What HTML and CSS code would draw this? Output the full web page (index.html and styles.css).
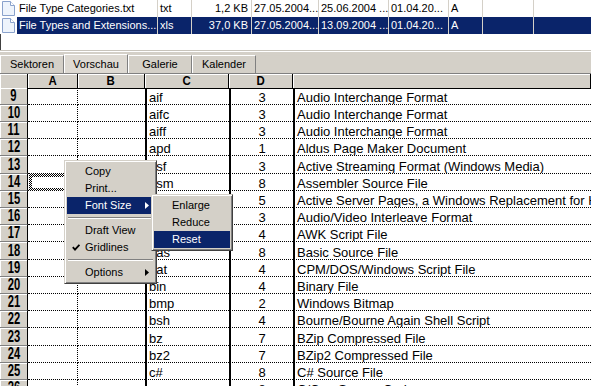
FILE: index.html
```html
<!DOCTYPE html>
<html lang="de">
<head>
  <meta charset="UTF-8">
  <title>Vorschau</title>
  <link rel="stylesheet" href="styles.css">
</head>
<body>
  <div class="files">
    <div class="file">
      <span class="icon"><svg width="13" height="15" viewBox="0 0 13 15"><path d="M0.5 0.5h8l4 4v10h-12z" fill="#eef4fc" stroke="#8aa2cc"/><path d="M8.5 0.5v4h4" fill="#fff" stroke="#8aa2cc"/></svg></span>
      <span>File Type Categories.txt</span>
      <span>txt</span>
      <span class="num">1,2 KB</span>
      <span>27.05.2004...</span>
      <span>25.06.2004 ...</span>
      <span>01.04.20...</span>
      <span>A</span>
      <span></span>
      <span></span>
    </div>
    <div class="file sel">
      <span class="icon"><svg width="13" height="15" viewBox="0 0 13 15"><path d="M0.5 0.5h8l4 4v10h-12z" fill="#eef4fc" stroke="#8aa2cc"/><path d="M8.5 0.5v4h4" fill="#fff" stroke="#8aa2cc"/></svg></span>
      <span>File Types and Extensions....</span>
      <span>xls</span>
      <span class="num">37,0 KB</span>
      <span>27.05.2004...</span>
      <span>13.09.2004 ...</span>
      <span>01.04.20...</span>
      <span>A</span>
      <span></span>
      <span></span>
    </div>
    <div class="rest"></div>
  </div>

  <div class="tabs">
    <div class="tab">Sektoren</div>
    <div class="tab on">Vorschau</div>
    <div class="tab">Galerie</div>
    <div class="tab">Kalender</div>
  </div>

  <div class="sheet">
    <div class="hdr">
      <div></div>
      <div><b>A</b></div>
      <div><b>B</b></div>
      <div><b>C</b></div>
      <div><b>D</b></div>
      <div></div>
    </div>
    <div class="rows">
      <div class="row"><div class="rh"><b>9</b></div><div class="a"></div><div></div><div class="c">aif</div><div class="d">3</div><div class="e">Audio Interchange Format</div></div>
      <div class="row"><div class="rh"><b>10</b></div><div class="a"></div><div></div><div class="c">aifc</div><div class="d">3</div><div class="e">Audio Interchange Format</div></div>
      <div class="row"><div class="rh"><b>11</b></div><div class="a"></div><div></div><div class="c">aiff</div><div class="d">3</div><div class="e">Audio Interchange Format</div></div>
      <div class="row"><div class="rh"><b>12</b></div><div class="a"></div><div></div><div class="c">apd</div><div class="d">1</div><div class="e">Aldus Page Maker Document</div></div>
      <div class="row"><div class="rh"><b>13</b></div><div class="a"></div><div></div><div class="c">asf</div><div class="d">3</div><div class="e">Active Streaming Format (Windows Media)</div></div>
      <div class="row"><div class="rh"><b>14</b></div><div class="a cur"></div><div></div><div class="c">asm</div><div class="d">8</div><div class="e">Assembler Source File</div></div>
      <div class="row"><div class="rh"><b>15</b></div><div class="a"></div><div></div><div class="c">asp</div><div class="d">5</div><div class="e">Active Server Pages, a Windows Replacement for HTML</div></div>
      <div class="row"><div class="rh"><b>16</b></div><div class="a"></div><div></div><div class="c">avi</div><div class="d">3</div><div class="e">Audio/Video Interleave Format</div></div>
      <div class="row"><div class="rh"><b>17</b></div><div class="a"></div><div></div><div class="c">awk</div><div class="d">4</div><div class="e">AWK Script File</div></div>
      <div class="row"><div class="rh"><b>18</b></div><div class="a"></div><div></div><div class="c">bas</div><div class="d">8</div><div class="e">Basic Source File</div></div>
      <div class="row"><div class="rh"><b>19</b></div><div class="a"></div><div></div><div class="c">bat</div><div class="d">4</div><div class="e">CPM/DOS/Windows Script File</div></div>
      <div class="row"><div class="rh"><b>20</b></div><div class="a"></div><div></div><div class="c">bin</div><div class="d">4</div><div class="e">Binary File</div></div>
      <div class="row"><div class="rh"><b>21</b></div><div class="a"></div><div></div><div class="c">bmp</div><div class="d">2</div><div class="e">Windows Bitmap</div></div>
      <div class="row"><div class="rh"><b>22</b></div><div class="a"></div><div></div><div class="c">bsh</div><div class="d">4</div><div class="e">Bourne/Bourne Again Shell Script</div></div>
      <div class="row"><div class="rh"><b>23</b></div><div class="a"></div><div></div><div class="c">bz</div><div class="d">7</div><div class="e">BZip Compressed File</div></div>
      <div class="row"><div class="rh"><b>24</b></div><div class="a"></div><div></div><div class="c">bz2</div><div class="d">7</div><div class="e">BZip2 Compressed File</div></div>
      <div class="row"><div class="rh"><b>25</b></div><div class="a"></div><div></div><div class="c">c#</div><div class="d">8</div><div class="e">C# Source File</div></div>
      <div class="row"><div class="rh"><b>26</b></div><div class="a"></div><div></div><div class="c">c</div><div class="d">8</div><div class="e">C/C++ Source Code</div></div>
    </div>
  </div>

  <!-- context menu -->
  <div class="menu">
    <div class="mi">Copy</div>
    <div class="mi">Print...</div>
    <div class="mi hot">Font Size
      <svg class="arr" width="4" height="7" viewBox="0 0 4 7"><path d="M0 0l4 3.5-4 3.5z" fill="currentColor"/></svg>
      <div class="menu sub">
        <div class="mi">Enlarge</div>
        <div class="mi">Reduce</div>
        <div class="mi hot">Reset</div>
      </div>
    </div>
    <div class="sep"></div>
    <div class="mi">Draft View</div>
    <div class="mi"><svg class="chk" width="8" height="7" viewBox="0 0 8 7"><path d="M0.8 3.2l2.2 2.4 4.4-4.8" fill="none" stroke="#000" stroke-width="1.8"/></svg>Gridlines</div>
    <div class="sep"></div>
    <div class="mi">Options
      <svg class="arr" width="4" height="7" viewBox="0 0 4 7"><path d="M0 0l4 3.5-4 3.5z" fill="currentColor"/></svg>
    </div>
  </div>
</body>
</html>
```

FILE: styles.css
```css
body {
  margin: 0;
  width: 591px;
  height: 386px;
  overflow: hidden;
  position: relative;
  background: #fff;
  font-family: "Liberation Sans", Arial, sans-serif;
  color: #000;
}

/* file list */
.files {
  height: 50px;
  display: flex;
  flex-direction: column;
  border-bottom: 1px solid #c8c4bc;
  font-size: 11px;
}
.file {
  display: grid;
  grid-template-columns: 17px 141px 34px 60px 67px 70px 60px 34px 51px 1fr;
  height: 17px;
  line-height: 17px;
}
.file span {
  border-right: 1px solid #d4d0c8;
  padding: 0 2px;
  white-space: nowrap;
  overflow: hidden;
}
.file span:last-child {
  border-right: 0;
}
.file .icon {
  border-right: 0;
  padding: 1px 0 0 2px;
}
.file .icon svg {
  display: block;
}
.file .num {
  text-align: right;
  padding-right: 3px;
}
.file.sel span:not(.icon) {
  background: #0a246a;
  color: #fff;
}
.rest {
  flex: 1;
  border-left: 1px solid #404040;
}

/* tabs */
.tabs {
  height: 22px;
  background: #d4d0c8;
  box-shadow: inset 0 1px #fff;
  border-bottom: 1px solid #808080;
  display: flex;
  align-items: flex-end;
  font-size: 11px;
}
.tab {
  box-sizing: border-box;
  width: 64px;
  height: 18px;
  line-height: 16px;
  text-align: center;
  border-top: 1px solid #fff;
  border-left: 1px solid #fff;
  border-right: 1px solid #808080;
}
.tab.on {
  height: 19px;
  line-height: 18px;
  background: #dedad3;
}

/* sheet */
.sheet {
  font-size: 13px;
}
.hdr, .row {
  display: grid;
  grid-template-columns: 28px 50px 67px 84px 64px 1fr;
}
.hdr {
  height: 14px;
}
.hdr div {
  box-sizing: border-box;
  background: #d4d0c8;
  border-right: 1px solid #000;
  border-bottom: 1px solid #000;
  box-shadow: inset 1px 1px #fff;
  text-align: center;
  line-height: 14px;
}
.hdr b {
  display: inline-block;
  font-size: 13px;
  transform: scaleX(.88);
}
.row {
  height: 17px;
}
.rows .row:nth-child(5n) {
  height: 18px;
}
.row div {
  box-sizing: border-box;
  display: flex;
  align-items: flex-end;
  padding: 0 2px;
  line-height: 12px;
  white-space: nowrap;
  border-bottom: 1px dotted #000;
}
.row .rh {
  justify-content: center;
  align-items: center;
  padding: 0;
  background: #d4d0c8;
  border-bottom: 1px solid #808080;
  border-right: 1px solid #000;
  box-shadow: inset 1px 1px #fff;
}
.rh b {
  display: inline-block;
  font-size: 16px;
  line-height: 14px;
  transform: scaleX(.7);
}
.row .a {
  border-right: 1px dotted #000;
}
.row .c, .row .d, .row .e {
  border-left: 2px solid #000;
}
.row .d {
  justify-content: center;
}
.row .e {
  overflow: hidden;
}
.row .cur {
  position: relative;
}
.cur::before {
  content: "";
  position: absolute;
  left: 1px;
  top: 0;
  right: -1px;
  bottom: -1px;
  background: repeating-conic-gradient(#000 0 25%, #fff 0 50%) 0 0 / 2px 2px;
}
.cur::after {
  content: "";
  position: absolute;
  left: 4px;
  top: 3px;
  right: 2px;
  bottom: 2px;
  background: #fff;
}

/* context menu */
.menu {
  position: absolute;
  left: 64px;
  top: 160px;
  width: 93px;
  box-sizing: border-box;
  padding: 2px;
  background: #d4d0c8;
  border: 1px solid;
  border-color: #d4d0c8 #404040 #404040 #d4d0c8;
  box-shadow: inset 1px 1px #fff, inset -1px -1px #808080;
  font-size: 11px;
  color: #000;
}
.mi {
  position: relative;
  height: 17px;
  line-height: 17px;
  padding-left: 18px;
  white-space: nowrap;
}
.mi.hot {
  background: #0a246a;
  color: #fff;
}
.sep {
  margin: 3px 1px;
  border-top: 1px solid #808080;
  border-bottom: 1px solid #fff;
}
.arr {
  position: absolute;
  right: 5px;
  top: 5px;
}
.chk {
  position: absolute;
  left: 5px;
  top: 5px;
}
.menu.sub {
  left: 84px;
  top: -3px;
  width: 82px;
}
```
